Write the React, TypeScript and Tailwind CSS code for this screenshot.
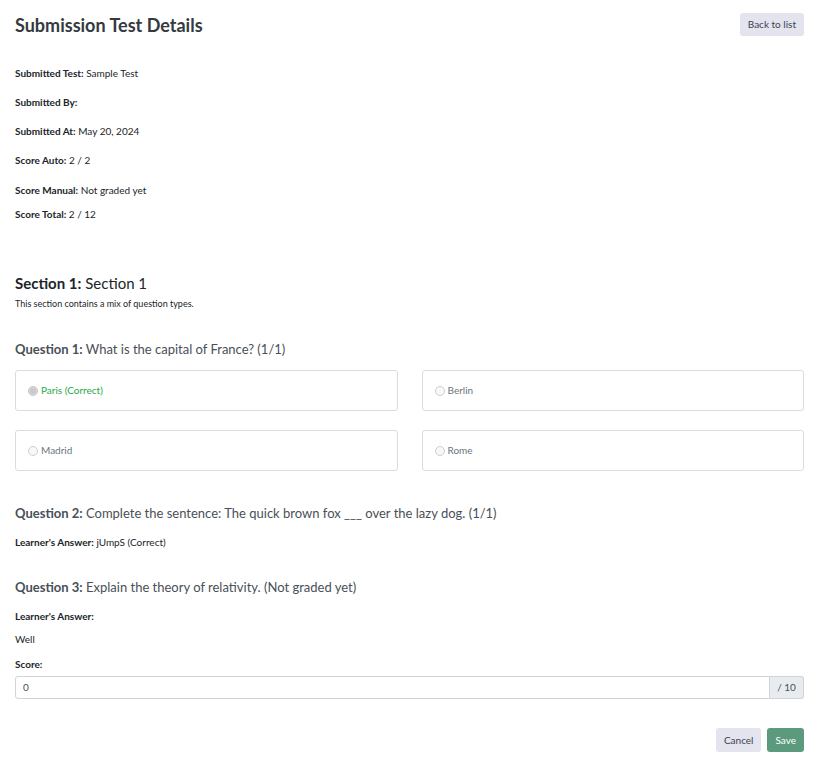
import React from 'react';

const Info = ({ label, value, className }: { label: string; value?: string; className?: string }) => (
  <p className={`text-[10px] leading-[14px] text-[#212529] ${className ?? ''}`}>
    <span className="font-bold">{label}</span> {value}
  </p>
);

const Option = ({ text, correct }: { text: string; correct?: boolean }) => (
  <div className="h-[41px] border border-[#dcdcdc] rounded-[3px] flex items-center px-[12px] gap-[3px]">
    <span
      className={`w-[10px] h-[10px] rounded-full border ${
        correct ? 'border-[#c4c4c4] bg-[#d9d9d9] flex items-center justify-center' : 'border-[#cfcfcf] bg-[#f8f8f8]'
      }`}
    >
      {correct && <span className="w-[6px] h-[6px] rounded-full bg-[#c8c8c8]" />}
    </span>
    <span className={`text-[10px] ${correct ? 'text-[#28a745]' : 'text-[#6c757d]'}`}>{text}</span>
  </div>
);

const QuestionTitle = ({ n, children }: { n: number; children: React.ReactNode }) => (
  <h4 className="text-[13px] leading-[18px] text-[#495057]">
    <span className="font-bold">Question {n}:</span> {children}
  </h4>
);

export default function App() {
  return (
    <div className="bg-white pl-[15px] pr-[12px] pt-[13px] pb-[12px] font-['Lato',sans-serif] text-[#212529]">
      <div className="flex justify-between items-start">
        <h2 className="text-[18px] font-bold text-[#343a40] leading-[22px] mt-[1px]">Submission Test Details</h2>
        <button className="h-[23px] px-[8px] rounded-[3px] bg-[#e3e4ee] text-[10px] text-[#3c3f55]">Back to list</button>
      </div>

      <div className="mt-[30px]">
        <Info label="Submitted Test:" value="Sample Test" />
        <Info label="Submitted By:" className="mt-[15px]" />
        <Info label="Submitted At:" value="May 20, 2024" className="mt-[15px]" />
        <Info label="Score Auto:" value="2 / 2" className="mt-[15px]" />
        <Info label="Score Manual:" value="Not graded yet" className="mt-[16px]" />
        <Info label="Score Total:" value="2 / 12" className="mt-[10px]" />
      </div>

      <h3 className="mt-[52px] text-[15px] leading-[20px] text-[#212529]">
        <span className="font-bold">Section 1:</span> Section 1
      </h3>
      <p className="mt-[5px] text-[9px] leading-[12px]">This section contains a mix of question types.</p>

      <div className="mt-[30px]">
        <QuestionTitle n={1}>What is the capital of France? (1/1)</QuestionTitle>
        <div className="mt-[12px] grid grid-cols-2 gap-x-[24px] gap-y-[19px]">
          <Option text="Paris (Correct)" correct />
          <Option text="Berlin" />
          <Option text="Madrid" />
          <Option text="Rome" />
        </div>
      </div>

      <div className="mt-[33px]">
        <QuestionTitle n={2}>Complete the sentence: The quick brown fox ___ over the lazy dog. (1/1)</QuestionTitle>
        <Info label="Learner's Answer:" value="jUmpS (Correct)" className="mt-[13px]" />
      </div>

      <div className="mt-[29px]">
        <QuestionTitle n={3}>Explain the theory of relativity. (Not graded yet)</QuestionTitle>
        <Info label="Learner's Answer:" className="mt-[13px]" />
        <p className="mt-[9px] text-[10px] leading-[14px]">Well</p>
        <Info label="Score:" className="mt-[11px]" />
        <div className="mt-[5px] flex h-[23px]">
          <input
            defaultValue="0"
            className="flex-1 border border-[#ced4da] rounded-l-[3px] px-[7px] text-[10px] text-[#495057] outline-none"
          />
          <span className="w-[34px] border border-l-0 border-[#ced4da] bg-[#e9ecef] rounded-r-[3px] flex items-center justify-center text-[10px] text-[#495057]">
            / 10
          </span>
        </div>
      </div>

      <div className="mt-[29px] flex justify-end gap-[6px]">
        <button className="h-[24px] px-[8px] rounded-[3px] bg-[#e3e4ee] text-[10px] text-[#3c3f55]">Cancel</button>
        <button className="h-[24px] px-[8px] rounded-[3px] bg-[#5b9a7d] text-[10px] text-white">Save</button>
      </div>
    </div>
  );
}
